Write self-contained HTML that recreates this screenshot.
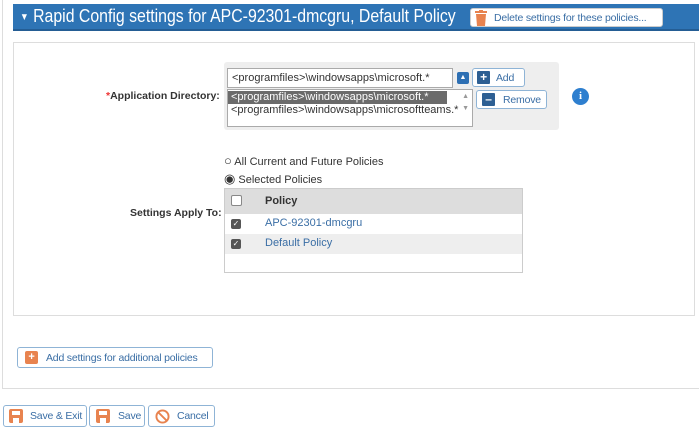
<!DOCTYPE html>
<html><head><style>
*{box-sizing:border-box;margin:0;padding:0}
body{width:699px;height:430px;background:#fff;font-family:"Liberation Sans",sans-serif;font-size:11px;color:#333;position:relative;overflow:hidden;white-space:nowrap}
.a{position:absolute}
.btn{position:absolute;border:1px solid #8fb4d6;border-radius:3px;background:#fff;color:#3a6ea5;font-size:10.5px;letter-spacing:-0.2px;display:flex;align-items:center;white-space:nowrap;overflow:hidden}
.ico{display:inline-block;background:#e8834f;color:#fff;font-weight:bold;text-align:center;border-radius:2px;flex:none}
.bico{display:inline-block;background:#2d5f93;color:#fff;font-weight:bold;text-align:center;width:13px;height:13px;line-height:12px;font-size:12px;border-radius:1px;flex:none}
svg{flex:none}
</style></head><body>
<div class="a" style="left:2px;top:0;width:697px;height:389px;border-left:1px solid #ddd;border-bottom:1px solid #ddd"></div>
<div class="a" style="left:13px;top:4px;width:686px;height:27px;background:#2e74b5;border-bottom:2px solid #245d94"></div>
<div class="a" style="left:20px;top:5px;color:#fff;font-size:18px;line-height:22px;transform:scaleX(0.88);transform-origin:left"><span style="font-size:10px;position:relative;top:-2px">&#9660;</span> Rapid Config settings for APC-92301-dmcgru, Default Policy</div>
<div class="btn" style="left:470px;top:8px;width:193px;height:19px;border-color:#ccc">
 <svg width="14" height="16" style="margin:0 6px 0 3px" viewBox="0 0 14 16"><rect x="1" y="1" width="12" height="2" fill="#e8834f"/><rect x="5" y="0" width="4" height="2" fill="#e8834f"/><path d="M2 4h10l-1 12H3z" fill="#e8834f"/></svg>
 <span>Delete settings for these policies...</span></div>
<div class="a" style="left:13px;top:42px;width:682px;height:274px;border:1px solid #ddd"></div>
<div class="a" style="left:224px;top:62px;width:335px;height:68px;background:#eee;border-radius:3px"></div>
<div class="a" style="left:227px;top:68px;width:226px;height:20px;border:1px solid #aaa;background:#fff;font-size:11px;line-height:18px;padding-left:4px">&lt;programfiles&gt;\windowsapps\microsoft.*</div>
<div class="a" style="left:457px;top:72px;width:12px;height:12px;background:#2d6fb3;border-radius:2px;color:#fff;font-size:7px;text-align:center;line-height:12px">&#9650;</div>
<div class="btn" style="left:472px;top:68px;width:53px;height:19px"><span class="bico" style="margin:0 6px 0 4px">+</span>Add</div>
<div class="a" style="left:227px;top:89px;width:246px;height:38px;border:1px solid #aaa;background:#fff;font-size:11px;line-height:13px">
 <div style="background:#6b6b6b;color:#fff;width:219px;margin-top:1px;padding-left:3px">&lt;programfiles&gt;\windowsapps\microsoft.*</div>
 <div style="padding-left:3px">&lt;programfiles&gt;\windowsapps\microsoftteams.*</div>
 <div class="a" style="right:3px;top:1px;color:#999;font-size:7px;line-height:12px">&#9650;<br>&#9660;</div>
</div>
<div class="btn" style="left:476px;top:90px;width:71px;height:19px"><span class="bico" style="margin:0 8px 0 5px">&#8211;</span>Remove</div>
<div class="a" style="left:572px;top:88px;width:17px;height:17px;border-radius:50%;background:#2e7fcf;color:#fff;font-weight:bold;text-align:center;line-height:17px;font-size:11px;font-family:'Liberation Serif',serif">i</div>
<div class="a" style="left:106px;top:90px;font-weight:bold;font-size:10.5px"><span style="color:#e33">*</span>Application Directory:</div>
<div class="a" style="left:224px;top:153px;font-size:11px"><span style="font-size:13px">&#9675;</span> All Current and Future Policies</div>
<div class="a" style="left:224px;top:171px;font-size:11px"><span style="font-size:13px">&#9673;</span> Selected Policies</div>
<div class="a" style="left:130px;top:207px;font-weight:bold;font-size:10.5px">Settings Apply To:</div>
<div class="a" style="left:224px;top:188px;width:299px;height:85px;border:1px solid #ccc;background:#fff">
 <div style="height:25px;background:#ddd;position:relative"><span class="a" style="left:6px;top:6px;width:11px;height:11px;border:1px solid #888;background:#fff;border-radius:2px"></span><b class="a" style="left:40px;top:6px">Policy</b></div>
 <div style="height:20px;position:relative"><span class="a" style="left:6px;top:5px;width:10px;height:10px;background:#555;border-radius:2px;color:#fff;font-size:8px;line-height:10px;text-align:center">&#10003;</span><span class="a" style="left:40px;top:3px;color:#3a6ea5">APC-92301-dmcgru</span></div>
 <div style="height:20px;background:#eee;position:relative"><span class="a" style="left:6px;top:5px;width:10px;height:10px;background:#555;border-radius:2px;color:#fff;font-size:8px;line-height:10px;text-align:center">&#10003;</span><span class="a" style="left:40px;top:3px;color:#3a6ea5">Default Policy</span></div>
</div>
<div class="btn" style="left:17px;top:347px;width:196px;height:21px"><span class="ico" style="width:13px;height:13px;line-height:13px;font-size:11px;margin:0 8px 0 7px">+</span>Add settings for additional policies</div>
<div class="btn" style="left:3px;top:405px;width:84px;height:22px"><svg width="14" height="14" style="margin:0 7px 0 5px" viewBox="0 0 14 14"><rect width="14" height="14" rx="2" fill="#e8834f"/><rect x="3" y="2" width="8" height="4" fill="#fff"/><rect x="4" y="9" width="6" height="5" fill="#fff"/></svg>Save &amp; Exit</div>
<div class="btn" style="left:89px;top:405px;width:56px;height:22px"><svg width="14" height="14" style="margin:0 8px 0 6px" viewBox="0 0 14 14"><rect width="14" height="14" rx="2" fill="#e8834f"/><rect x="3" y="2" width="8" height="4" fill="#fff"/><rect x="4" y="9" width="6" height="5" fill="#fff"/></svg>Save</div>
<div class="btn" style="left:148px;top:405px;width:67px;height:22px"><svg width="15" height="15" style="margin:0 7px 0 6px" viewBox="0 0 16 16"><circle cx="8" cy="8" r="6.5" fill="none" stroke="#e8834f" stroke-width="2"/><path d="M3.5 3.5l9 9" stroke="#e8834f" stroke-width="2"/></svg>Cancel</div>
</body></html>
